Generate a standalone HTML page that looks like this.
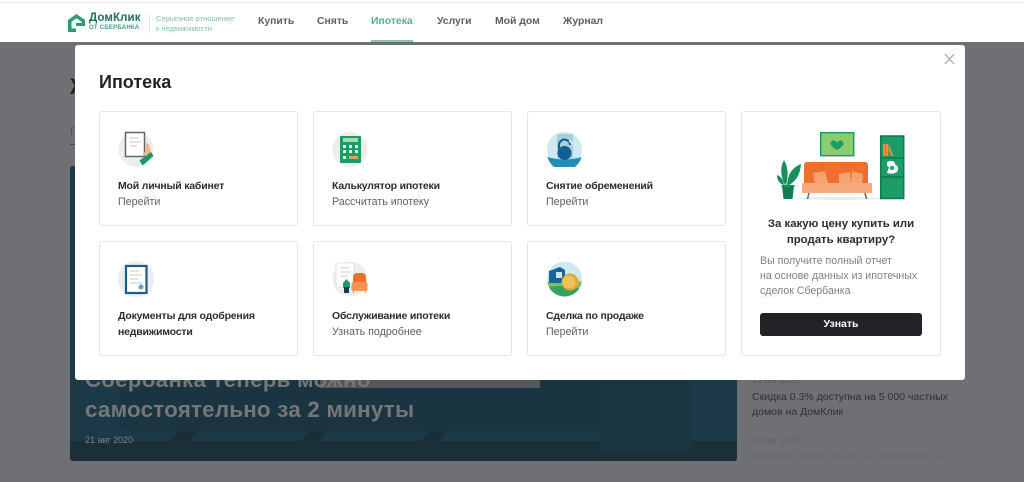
<!DOCTYPE html>
<html lang="ru"><head><meta charset="utf-8"><title>Ипотека</title>
<style>
*{box-sizing:border-box;margin:0;padding:0}
html,body{width:1024px;height:482px;overflow:hidden;background:#6f7073;font-family:"Liberation Sans","DejaVu Sans",sans-serif}
.a{position:absolute;white-space:nowrap}
#hdr{left:0;top:0;width:1024px;height:42px;background:#fff}
.nav{top:15px;font-size:10.4px;font-weight:700;color:#5b5f63;line-height:14px}
#banner{left:70px;top:166px;width:667px;height:295px;background:#1c3a48;border-radius:3px;overflow:hidden}
#modal{left:75px;top:45px;width:890px;height:335px;background:#fff;border-radius:3px}
.card{position:absolute;width:199px;height:115px;background:#fff;border:1px solid #e4e5e6;border-radius:3px}
.t{position:absolute;left:18px;top:66px;font-size:10.5px;letter-spacing:-.2px;font-weight:700;color:#2b2d30;line-height:16px;white-space:nowrap}
.s{position:absolute;left:18px;top:83px;font-size:10.7px;color:#5d6063;line-height:15px;white-space:nowrap}
.ic{position:absolute;left:18px;top:19px;width:36px;height:36px}
</style></head><body>
<div class="a" id="hdr"></div>
<div class="a" style="left:0;top:2px;width:1024px;height:1px;background:#e8e8e8"></div>
<svg class="a" style="left:67px;top:13px" width="20" height="20" viewBox="0 0 20 20"><path d="M1 7 9.500 1 18 7V13H9V19H1Z" fill="#2f9c6f"/><path d="M4.500 8.800 9.500 5.300 14.500 8.800V10H9V15.500H4.500Z" fill="#fff"/></svg>
<div class="a" style="left:89px;top:12px;font-size:11.5px;font-weight:700;color:#1f6f5c;line-height:13px;letter-spacing:.1px">ДомКлик</div>
<div class="a" style="left:89px;top:24px;font-size:6px;font-weight:700;color:#3fa27e;line-height:8px;letter-spacing:.25px">ОТ СБЕРБАНКА</div>
<div class="a" style="left:149px;top:14px;width:1px;height:19px;background:#dfe3e2"></div>
<div class="a" style="left:156px;top:14px;font-size:7.5px;color:#82bfa8;line-height:10px">Серьезное отношение<br>к недвижимости</div>
<div class="a nav" style="left:258px">Купить</div>
<div class="a nav" style="left:317px">Снять</div>
<div class="a nav" style="left:371px;color:#5cae8a">Ипотека</div>
<div class="a" style="left:371px;top:40px;width:42px;height:2px;background:#8cc4a6"></div>
<div class="a nav" style="left:437px">Услуги</div>
<div class="a nav" style="left:495px">Мой дом</div>
<div class="a nav" style="left:563px">Журнал</div>

<div class="a" style="left:70px;top:74px;font-size:22px;font-weight:700;color:#222;line-height:26px">Ж</div>
<div class="a" style="left:70px;top:125px;font-size:11px;color:#4a4b4e;line-height:14px">П</div>
<div class="a" style="left:70px;top:144px;width:6px;height:1px;background:#4a4b4e"></div>
<div class="a" id="banner">
<svg width="667" height="295" style="position:absolute;left:0;top:0"><path d="M0 0H667V295H0z" fill="#1b3946"/><path d="M50 190H540V265H60q-10 0-10-10z" fill="#1a3541"/><path d="M250 205H470V222H250z" fill="#55585a"/><path d="M110 265l-10 10h18l10-10zM240 265l-10 10h18l10-10zM360 265l-10 10h18l10-10z" fill="#192e38"/><path d="M0 275H667V295H0z" fill="#1b2f39"/><path d="M530 200h90v85h-90z" fill="#1a3643"/></svg>
</div>
<div class="a" style="left:85px;top:365px;font-size:22.400px;font-weight:700;color:#747678;line-height:30px;letter-spacing:.2px">Сбербанка теперь можно<br>самостоятельно за 2 минуты</div>
<div class="a" style="left:85px;top:434px;font-size:9px;color:#7d8184;line-height:12px">21 авг 2020</div>
<div class="a" style="left:752px;top:374px;font-size:9px;color:#55565a;line-height:12px">13 авг 2020</div>
<div class="a" style="left:752px;top:389px;font-size:10.500px;color:#2e3033;line-height:15px;padding-top:.5px">Скидка 0,3% доступна на 5 000 частных<br>домов на ДомКлик</div>
<div class="a" style="left:752px;top:434px;font-size:9px;color:#636467;line-height:12px">10 авг 2020</div>
<div class="a" style="left:752px;top:450px;font-size:9.700px;color:#67686b;line-height:14px">Минимум заявок онлайн на недвижимость</div>

<div class="a" id="modal">
<div class="a" style="left:24px;top:26px;font-size:18px;font-weight:700;color:#222427;line-height:22px">Ипотека</div>
<svg class="a" style="left:869px;top:8px" width="11" height="12" viewBox="0 0 11 12"><path d="M1 1l9 10M10 1L1 11" stroke="#a9abad" stroke-width="1.300" fill="none"/></svg>

<div class="card" style="left:24px;top:66px">
<svg class="ic" viewBox="0 0 36 36"><circle cx="18" cy="18.500" r="17.500" fill="#eceded"/><rect x="7.500" y="1.500" width="19" height="24" fill="#fff" stroke="#63676a" stroke-width="1.500"/><path d="M12 7h8M11 11h12M12 15h7" stroke="#c5c7c9"/><path d="M27 11q4 1 5 6l1 5-8 3v-3l2-1z" fill="#f3b592"/><path d="M33 21l2.500 4-11 9.500-3-5z" fill="#1a9a63"/></svg>
<div class="t">Мой личный кабинет</div><div class="s">Перейти</div></div>

<div class="card" style="left:238px;top:66px">
<svg class="ic" viewBox="0 0 36 36"><circle cx="18" cy="18.500" r="17.500" fill="#eceded"/><rect x="8" y="5" width="21" height="27" rx="1" fill="#1c9c68"/><rect x="11" y="7" width="15" height="4" fill="#a4dcb8"/><path d="M11 14h3v3h-3zM17 14h3v3h-3zM23 14h3v3h-3zM11 19h3v3h-3zM17 19h3v3h-3zM23 19h3v3h-3zM11 25h3v3h-3z" fill="#d9f2e2"/><rect x="17" y="25" width="9" height="3" fill="#d8a75a"/></svg>
<div class="t">Калькулятор ипотеки</div><div class="s">Рассчитать ипотеку</div></div>

<div class="card" style="left:452px;top:66px">
<svg class="ic" viewBox="0 0 36 36"><circle cx="18.500" cy="18.500" r="17.500" fill="#cfe9f3"/><rect x="11" y="3" width="16" height="25" fill="#a7cfdf"/><path d="M1.500 26q17 5 34 0a17.500 17.500 0 0 1-34 0z" fill="#1f8fb5"/><path d="M13 18v-4a5.500 5.500 0 0 1 11 0" fill="none" stroke="#0f5f92" stroke-width="2"/><circle cx="18.500" cy="22" r="7" fill="#0f5f92"/><path d="M23 10l4 3" stroke="#e7f3f8" stroke-width="1.500"/></svg>
<div class="t">Снятие обременений</div><div class="s">Перейти</div></div>

<div class="card" style="left:24px;top:196px">
<svg class="ic" viewBox="0 0 36 36"><circle cx="18" cy="18" r="18" fill="#eceded"/><rect x="8" y="5" width="20.500" height="27" fill="#fff" stroke="#1b5f86" stroke-width="2.200"/><path d="M12 10h9M12 14h12M12 18h8M12 22h12" stroke="#c6cbce"/><circle cx="23" cy="26" r="2.500" fill="#6a9fbe"/></svg>
<div class="t">Документы для одобрения<br>недвижимости</div></div>

<div class="card" style="left:238px;top:196px">
<svg class="ic" viewBox="0 0 36 36"><circle cx="18" cy="18" r="17.500" fill="#eceded"/><rect x="4" y="2" width="18" height="24" fill="#fff" stroke="#e2e3e4"/><path d="M8 7h9M8 11h11M8 15h8" stroke="#d0d1d3"/><path d="M11 22l3.500-4 3.500 4v5h-7z" fill="#1d9c63"/><rect x="12" y="26" width="5" height="6" fill="#123f55"/><rect x="21" y="12" width="13" height="15" rx="4" fill="#ef6f2e"/><rect x="19.500" y="21" width="16" height="9" rx="2" fill="#f39356"/><path d="M21.500 30v2M33.500 30v2" stroke="#b98"/></svg>
<div class="t">Обслуживание ипотеки</div><div class="s">Узнать подробнее</div></div>

<div class="card" style="left:452px;top:196px">
<svg class="ic" viewBox="0 0 36 36"><defs><clipPath id="c"><circle cx="18.500" cy="18" r="17.500"/></clipPath></defs><g clip-path="url(#c)"><rect width="37" height="36" fill="#cfe9f0"/><path d="M0 21q18-4 37 0v15H0z" fill="#7cc05c"/><path d="M0 27q18-5 37 2v7H0z" fill="#35a35e"/><path d="M3 10l11-4 5 3v13H3z" fill="#17659c"/><rect x="10" y="11" width="6" height="6" fill="#cfe4ef"/></g><circle cx="24" cy="21" r="8.500" fill="#dca935"/><circle cx="23" cy="21" r="6.500" fill="#eec255"/></svg>
<div class="t">Сделка по продаже</div><div class="s">Перейти</div></div>

<div class="card" style="left:666px;top:66px;width:200px;height:245px">
<svg style="position:absolute;left:34px;top:19px" width="130" height="72" viewBox="0 0 130 72">
<ellipse cx="64" cy="67.500" rx="42" ry="1.500" fill="#e8eae9"/>
<rect x="44.700" y="1.700" width="33" height="23" fill="#8ccc70" stroke="#1e9c68" stroke-width="1.500"/>
<path d="M61 19q-6.500-3.500-6.500-7 1-3 3.500-2.500 2 .5 3 2 1-1.500 3-2 2.500-.5 3.500 2.500 0 3.500-6.500 7z" fill="#1e9c68"/>
<rect x="104.700" y="5" width="23" height="62.500" fill="#1c9c68" stroke="#0f7a50" stroke-width="1.500"/>
<path d="M105 27h22M105 46h22" stroke="#0f7a50" stroke-width="1.500"/>
<path d="M107 13h2.500v12H107zM110 13h2.500v12H110zM113 14l4.500 11h-2.500l-2-6z" fill="#ef8a3e"/>
<path d="M111 31q7-3 8 2l3 3q1 6-5 6.500-5 .5-6-1l2-5-2-2z" fill="#fff"/><circle cx="116" cy="37" r="2" fill="#1c9c68"/>
<path d="M9 54Q2 40 8 29q6 10 2 25zM11 54q1-16 14-21-1 15-12 21zM8 54Q7 46 1 44q0 8 7 10z" fill="#13915f"/>
<path d="M6 55h12l-1.500 13H7.500z" fill="#0f7d55"/><rect x="5.500" y="54" width="13" height="2" fill="#13915f"/>
<rect x="28" y="31" width="64" height="24" rx="3" fill="#ef6f2e"/>
<path d="M47 31v12M72 31v12" stroke="#e2621f" stroke-width=".8"/>
<path d="M37 42l12-2 3 13H39zM63 43l11-2 1 12H63zM76 40l11 3-1 10H75z" fill="#f6a371"/>
<rect x="26" y="52" width="70" height="10" rx="1" fill="#f6ab7d"/>
<path d="M33 62l-1.500 6M89 62l1.500 6" stroke="#5c6c66" stroke-width="1.500"/>
</svg>
<div style="position:absolute;left:0;width:198px;top:104px;text-align:center;font-size:11.400px;font-weight:700;color:#2b2d30;line-height:16px">За какую цену купить или<br>продать квартиру?</div>
<div style="position:absolute;left:18px;top:142px;font-size:10.600px;color:#7d8083;line-height:15px;white-space:nowrap">Вы получите полный отчет<br>на основе данных из ипотечных<br>сделок Сбербанка</div>
<div style="position:absolute;left:18px;top:201px;width:162px;height:23px;background:#212326;border-radius:3px;color:#fff;font-size:10.500px;font-weight:700;text-align:center;line-height:23px">Узнать</div>
</div>
</div>
</body></html>
